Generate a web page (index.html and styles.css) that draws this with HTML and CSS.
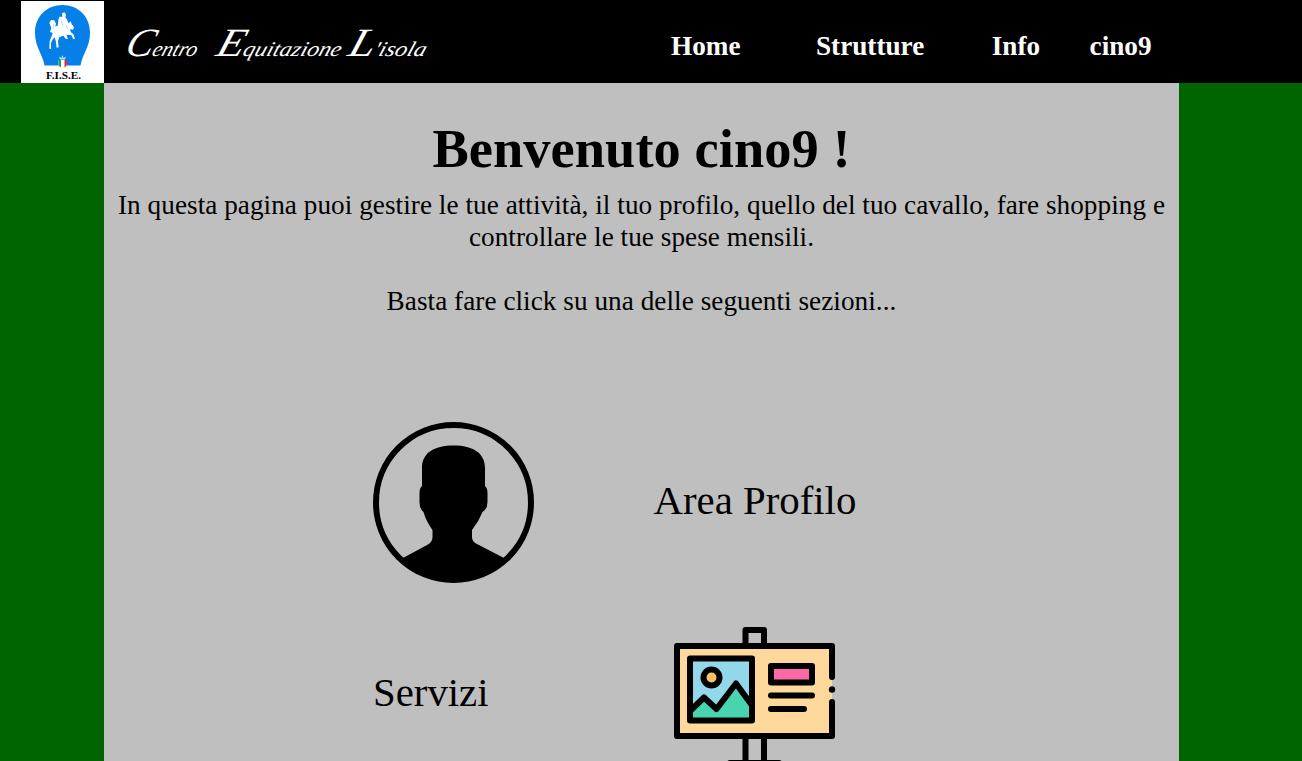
FILE: index.html
```html
<!DOCTYPE html>
<html lang="it">
<head>
<meta charset="utf-8">
<title>Centro Equitazione L'isola</title>
<link rel="stylesheet" href="styles.css">
</head>
<body>
<header class="topbar">
  <svg class="logo" viewBox="0 0 83 82" role="img" aria-label="F.I.S.E.">
    <rect width="83" height="82" fill="#fff"/>
    <path d="M23.500 64.500 C22 54 14 46 14 32 C14 15 26 4 41.500 4 C57 4 69 15 69 32 C69 46 61 54 59.500 64.500Z" fill="#0480e8"/>
    <g transform="translate(-21 -1) scale(.3333)">
      <path d="M186 40 L193 37 L198 43 L196 52 L202 60 L205 70 L212 64 L215 72 L222 82 L219 90 L211 86 L212 96 L220 102 L225 116 L220 118 L214 106 L205 104 L199 106 L204 116 L198 117 L190 107 L178 111 L174 124 L176 142 L170 143 L168 126 L164 112 L157 120 L153 130 L153 147 L148 146 L149 124 L155 108 L158 98 L150 96 L154 84 L148 68 L153 60 L163 61 L168 71 L166 80 L174 76 L175 60 L178 50 L187 50Z" fill="#fff"/>
      <path d="M184 62 L188 76 M199 76 L203 88 M161 74 L161 86" fill="none" stroke="#8fc5f4" stroke-width="2"/>
    </g>
    <path d="M38 55.500 L40.500 57 L41.500 54 L42.500 57 L45 55.500 L44 58.500 H39Z" fill="#bcdcf7"/>
    <path d="M37.500 59 H46 V64 Q45 66 41.500 67.500 Q38 66 37.500 64Z" fill="#fff"/>
    <path d="M37.500 59 H40 V66.500 Q37.500 65.500 37.500 63Z" fill="#25a23b"/>
    <path d="M43.500 59 H46 V63 Q46 65.500 43.500 66.500Z" fill="#ec2636"/>
    <text class="logo-text" x="25" y="78" textLength="35" lengthAdjust="spacingAndGlyphs">F.I.S.E.</text>
  </svg>
  <svg class="brand" viewBox="-16 -10 332 80" role="img" aria-label="Centro Equitazione L'isola">
    <g class="brand-text" transform="translate(14.500 0) skewX(-18)">
      <text x="-2" y="43" textLength="72" lengthAdjust="spacingAndGlyphs"><tspan class="cap">C</tspan>entro</text>
      <text x="89" y="43" textLength="125" lengthAdjust="spacingAndGlyphs"><tspan class="cap">E</tspan>quitazione</text>
      <text x="221" y="43" textLength="78" lengthAdjust="spacingAndGlyphs"><tspan class="cap">L</tspan>'isola</text>
    </g>
  </svg>
  <nav class="menu">
    <a class="item home">Home</a>
    <a class="item places">Strutture</a>
    <a class="item info">Info</a>
    <a class="item">cino9</a>
  </nav>
</header>
<main class="content">
  <h1 class="title">Benvenuto cino9 !</h1>
  <p class="intro">In questa pagina puoi gestire le tue attività, il tuo profilo, quello del tuo cavallo, fare shopping e<br>controllare le tue spese mensili.</p>
  <p class="intro">Basta fare click su una delle seguenti sezioni...</p>
  <section class="sections">
    <div class="row profile">
      <svg class="avatar" viewBox="0 0 162 162">
        <circle cx="80.500" cy="80.500" r="77.500" fill="none" stroke="#000" stroke-width="6"/>
        <path d="M29 136.500 L55 122.500 Q59.500 120 59.500 115 V108 Q53 99 50.500 90 Q46.500 87 46.500 80 V71 Q46.500 66 49 64 V46 C49 31 61 23.500 80.500 23.500 C100 23.500 112 31 112 46 V64 Q114.500 66 114.500 71 V80 Q114.500 87 109.500 90 Q106 99 99 108 V115 Q99 119 103 121.500 L132 136.500 A77 77 0 0 1 29 136.500Z"/>
      </svg>
      <span class="label">Area Profilo</span>
    </div>
    <div class="row services">
      <span class="label">Servizi</span>
      <svg class="board" viewBox="0 0 162 162">
        <g fill="#c0c0c0" stroke="#000" stroke-width="6" stroke-linejoin="round" stroke-linecap="round">
          <path d="M71.500 19 V3 H90 V19 M71.500 109 V138 H90 V109 M56 136 H105"/>
          <rect x="3" y="19" width="155" height="90" fill="#ffd99b" stroke="none"/>
          <path d="M158 50 V19 H3 V109 H158 V75" fill="none"/>
          <rect x="16" y="31.500" width="62" height="62" fill="#92d8ea" stroke="none"/>
          <path d="M16 84 L30 71 L42.500 82 L62 56.500 L78 78 V93 H16Z" fill="#49d3ae" stroke="none"/>
          <path d="M17 83 L30 70.500 L42.500 82 L62 56.500 L77 77" fill="none"/>
          <rect x="16" y="31.500" width="62" height="62" fill="none"/>
          <circle cx="37.500" cy="50.500" r="8" fill="#fdc265"/>
          <rect x="97" y="39" width="41" height="16.500" fill="#fb6aa6"/>
          <path d="M97 68.500 H138 M97 82 H130" fill="none"/>
        </g>
        <circle cx="158" cy="62.500" r="3.200"/>
      </svg>
    </div>
  </section>
</main>
</body>
</html>
```
FILE: styles.css
```css
* {
  box-sizing: border-box;
}

body {
  margin: 0;
  height: 761px;
  overflow: hidden;
  background: #006400;
  color: #000;
  font: 27.2px/32px "Liberation Serif", "Times New Roman", serif;
}

.topbar {
  display: flex;
  height: 83px;
  padding-left: 21px;
  background: #000;
  color: #fff;
}

.logo {
  width: 83px;
  height: 82px;
  margin-top: 1px;
}

.logo-text {
  font: bold 10px "Liberation Serif", serif;
}

.brand {
  width: 332px;
  height: 80px;
  margin: 3px 0 0 5px;
  overflow: visible;
}

/* Script-like lettering: small lowercase, tall slanted capitals */
.brand-text {
  fill: #fff;
  font: italic 21px "Liberation Serif", serif;
}

.cap {
  font-size: 40px;
}

.menu {
  display: flex;
  align-items: center;
  margin-left: 230px;
  padding-top: 9px;
}

.item {
  font-weight: bold;
}

.home {
  margin-right: 75.5px;
}

.places {
  margin-right: 67.5px;
}

.info {
  margin-right: 49.5px;
}

.content {
  width: 1075px;
  height: 678px;
  margin-left: 104px;
  padding-top: 36px;
  overflow: hidden;
  background: #bfbfbf;
  text-align: center;
}

.title {
  margin: 0 0 9px;
  font-size: 54.4px;
  line-height: 61px;
  letter-spacing: 0.07px;
}

.intro {
  margin: 0 0 32px;
  letter-spacing: 0.05px;
  white-space: nowrap;
}

.sections {
  padding: 73px 0 0 269px;
  text-align: left;
}

.row {
  display: flex;
  align-items: center;
}

.profile {
  gap: 118.5px;
  margin-bottom: 43px;
}

.services {
  gap: 185px;
}

.avatar,
.board {
  width: 162px;
  height: 162px;
  flex: none;
}

.label {
  font-size: 40.8px;
  line-height: 46px;
}

.profile .label {
  margin-bottom: 4px;
}

.services .label {
  margin-bottom: 30px;
}
```
